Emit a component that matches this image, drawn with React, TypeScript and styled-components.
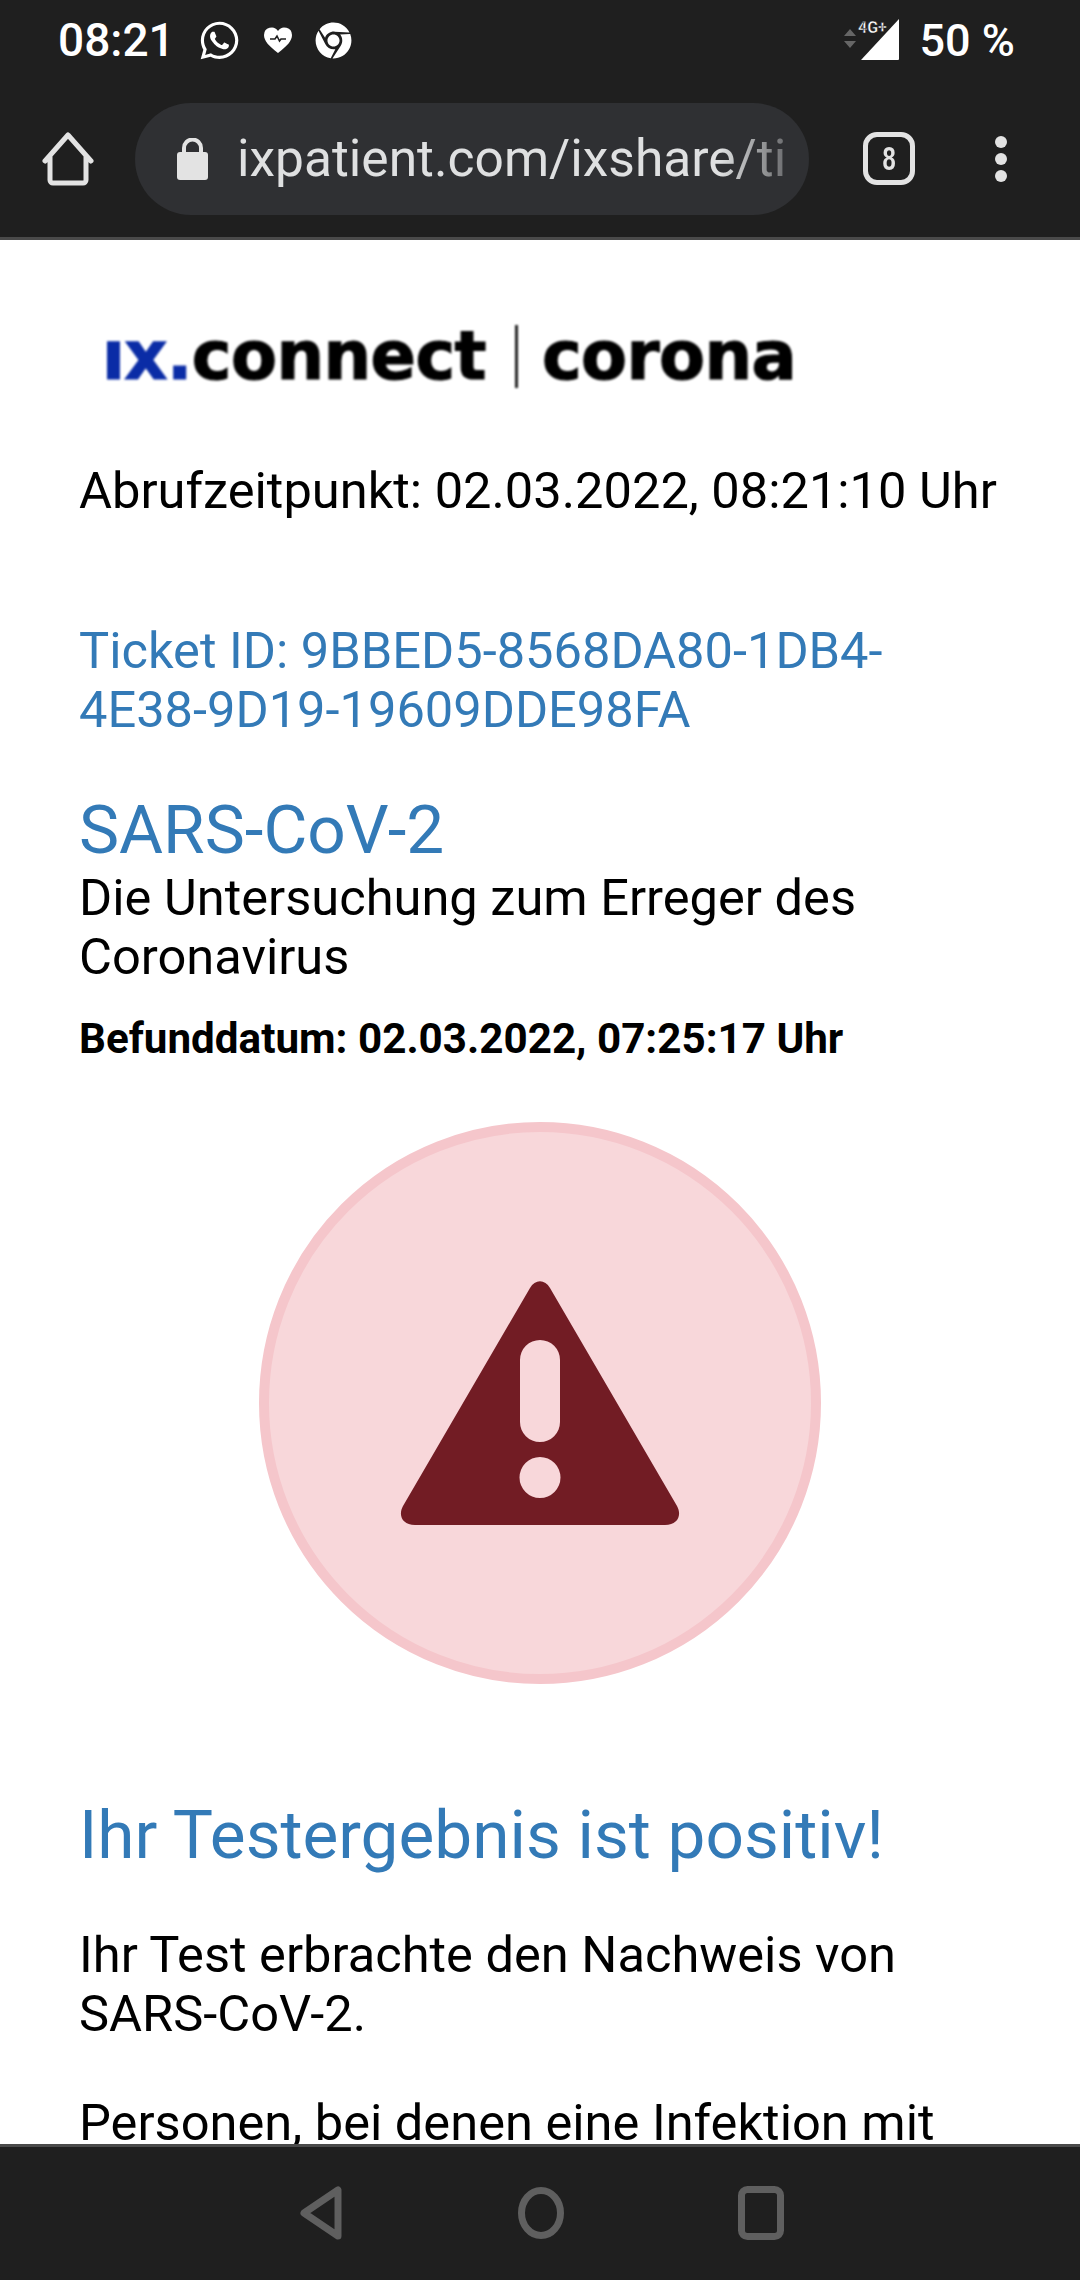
import { FaChrome, FaWhatsapp } from "react-icons/fa";
import styled, { createGlobalStyle } from "styled-components";

const GlobalStyle = createGlobalStyle`
  html, body {
    margin: 0;
    padding: 0;
    background: #1f1f1f;
  }
  * {
    box-sizing: border-box;
  }
`;

const Screen = styled.div`
  width: 1080px;
  height: 2280px;
  display: flex;
  flex-direction: column;
  overflow: hidden;
  font-family: Roboto, "Liberation Sans", sans-serif;
  background: #fff;
`;

const TopChrome = styled.header`
  height: 240px;
  flex: none;
  background: #1f1f1f;
  border-bottom: 3px solid #4a4a4a;
`;

const StatusBar = styled.div`
  height: 80px;
  padding: 0 65px 0 58px;
  display: flex;
  align-items: center;
  color: #fff;
`;

const StatusText = styled.span<{ $large?: boolean }>`
  font-size: ${(p) => (p.$large ? 46 : 45)}px;
  font-weight: 500;
  line-height: 1;
`;

const NotificationIcons = styled.div`
  display: flex;
  align-items: center;
  margin-left: 23px;
  gap: 22px;
  flex: 1;
`;

const SignalWrap = styled.div`
  margin-right: 19px;
`;

const Toolbar = styled.div`
  height: 157px;
  padding-left: 42px;
  display: flex;
  align-items: center;
`;

const AddressBar = styled.div`
  width: 674px;
  height: 112px;
  margin-left: 41px;
  padding: 0 23px 0 42px;
  border-radius: 56px;
  background: #2f3033;
  display: flex;
  align-items: center;
`;

const UrlText = styled.div`
  margin-left: 29px;
  flex: 1;
  overflow: hidden;
  white-space: nowrap;
  font-size: 51.500px;
  line-height: 60px;
  color: #dfe0e1;
  mask-image: linear-gradient(to right, #000 88%, rgba(0, 0, 0, 0.35) 100%);
`;

const TabCount = styled.div`
  width: 52px;
  height: 53px;
  margin-left: 54px;
  border: 5px solid #e3e3e3;
  border-radius: 14px;
  display: flex;
  align-items: center;
  justify-content: center;
  color: #e3e3e3;
`;

const TabDigit = styled.span`
  font-family: "Liberation Sans", sans-serif;
  font-size: 33px;
  font-weight: 700;
  line-height: 1;
  transform: scaleX(0.72);
`;

const MenuDots = styled.div`
  margin-left: 80px;
  display: flex;
  flex-direction: column;
  gap: 5px;
`;

const MenuDot = styled.span`
  width: 12px;
  height: 12px;
  border-radius: 50%;
  background: #e3e3e3;
`;

const Page = styled.main`
  flex: 1;
  min-height: 0;
  overflow: hidden;
  padding: 76px 30px 0 79px;
  color: #000;
`;

const Logo = styled.div`
  height: 80px;
  margin-left: 23px;
  display: flex;
  align-items: center;
  font-family: "DejaVu Sans", sans-serif;
  font-size: 67px;
  font-weight: 700;
  letter-spacing: -0.6px;
  line-height: 80px;
  color: #000;
  -webkit-text-stroke: 1.2px currentColor;
  filter: blur(0.8px);
`;

const LogoBlue = styled.span`
  color: #0a2ca6;
`;

const LogoRule = styled.span`
  width: 3px;
  height: 63px;
  margin: 0 24px 0 29px;
  background: #222;
`;

const BodyText = styled.p<{ $top?: number }>`
  margin: ${(p) => p.$top ?? 0}px 0 0;
  font-size: 50.600px;
  line-height: 59px;
`;

const TicketText = styled(BodyText)`
  color: #337ab7;
`;

const Title = styled.h2<{ $top: number }>`
  margin: ${(p) => p.$top}px 0 0;
  font-size: 67.500px;
  font-weight: 400;
  line-height: 76px;
  color: #337ab7;
`;

const ResultDate = styled.p`
  margin: 28px 0 0;
  font-size: 42.200px;
  font-weight: 700;
  line-height: 50px;
`;

const AlertCircle = styled.div`
  width: 562px;
  height: 562px;
  margin: 58px 0 0 180px;
  border: 10px solid #f5c6cb;
  border-radius: 50%;
  background: #f8d7da;
  display: flex;
  align-items: center;
  justify-content: center;
`;

const NavBar = styled.footer`
  height: 136px;
  flex: none;
  background: #1f1f1f;
  border-top: 3px solid #4a4a4a;
  display: flex;
  align-items: center;
  padding: 0 0 2px 300px;
  gap: 174px;
`;

const HeartPulse = () => (
  <svg width="30" height="28" viewBox="0 0 30 28">
    <path
      fill="#fff"
      d="M15 27C6 20 1 15 1 9a7.6 7.6 0 0 1 14-4 7.6 7.6 0 0 1 14 4c0 6-5 11-14 18z"
    />
    <path
      fill="none"
      stroke="#1f1f1f"
      strokeWidth="1.6"
      d="M7 13h5l2-3 2.500 5 1.500-2h5"
    />
  </svg>
);

const Signal = () => (
  <svg width="58" height="42" viewBox="0 0 58 42" style={{ display: "block" }}>
    <path fill="#666" d="M7 10l6 7H1zM7 29l6-7H1z" />
    <path fill="#fff" d="M56 0v40a1 1 0 0 1-1 1H18z" />
    <text
      x="15"
      y="14"
      fill="#fff"
      stroke="#1f1f1f"
      strokeWidth="0.5"
      fontFamily="Roboto, sans-serif"
      fontSize="16"
      fontWeight="700"
    >
      4G+
    </text>
  </svg>
);

const HomeIcon = () => (
  <svg width="52" height="54" viewBox="0 0 52 54" style={{ flex: "none" }}>
    <path
      fill="none"
      stroke="#e3e3e3"
      strokeWidth="5"
      strokeLinejoin="round"
      strokeLinecap="round"
      d="M3 29 26 3l23 26M8 24v24a3 3 0 0 0 3 3h30a3 3 0 0 0 3-3V24"
    />
  </svg>
);

const LockIcon = () => (
  <svg width="31" height="42" viewBox="0 0 31 42" style={{ flex: "none" }}>
    <path
      fill="#e3e3e3"
      d="M3 14h25a3 3 0 0 1 3 3v22a3 3 0 0 1-3 3H3a3 3 0 0 1-3-3V17a3 3 0 0 1 3-3z"
    />
    <path
      fill="none"
      stroke="#e3e3e3"
      strokeWidth="4"
      d="M7 15V10a8.500 8.500 0 0 1 17 0v5"
    />
  </svg>
);

const WarningIcon = () => (
  <svg width="280" height="244" viewBox="0 0 280 244">
    <path
      fill="#721c24"
      fillRule="evenodd"
      d="M130 7c5-9 15-9 20 0l127 218c5 9 1 19-12 19H15C2 244-2 234 3 225zM120 79v62a20 20 0 0 0 40 0V79a20 20 0 0 0-40 0zM140 176a20.500 20.500 0 1 0 0 41 20.500 20.500 0 0 0 0-41z"
    />
  </svg>
);

const BackIcon = () => (
  <svg width="44" height="54" viewBox="0 0 44 54">
    <path
      fill="none"
      stroke="#5f5f5f"
      strokeWidth="7"
      strokeLinejoin="round"
      d="M38 4v46L4 27z"
    />
  </svg>
);

const HomeCircle = () => (
  <svg width="46" height="54" viewBox="0 0 46 54">
    <ellipse
      cx="23"
      cy="27"
      rx="19.500"
      ry="22.500"
      fill="none"
      stroke="#5f5f5f"
      strokeWidth="7"
    />
  </svg>
);

const RecentsIcon = () => (
  <svg width="46" height="54" viewBox="0 0 46 54">
    <rect
      x="3.500"
      y="3.500"
      width="39"
      height="47"
      rx="6"
      fill="none"
      stroke="#5f5f5f"
      strokeWidth="7"
    />
  </svg>
);

const App = () => {
  return (
    <Screen>
      <GlobalStyle />
      <TopChrome>
        <StatusBar>
          <StatusText $large>08:21</StatusText>
          <NotificationIcons>
            <FaWhatsapp size={43} />
            <HeartPulse />
            <FaChrome size={37} />
          </NotificationIcons>
          <SignalWrap>
            <Signal />
          </SignalWrap>
          <StatusText>50 %</StatusText>
        </StatusBar>
        <Toolbar>
          <HomeIcon />
          <AddressBar>
            <LockIcon />
            <UrlText>ixpatient.com/ixshare/ti</UrlText>
          </AddressBar>
          <TabCount>
            <TabDigit>8</TabDigit>
          </TabCount>
          <MenuDots>
            <MenuDot />
            <MenuDot />
            <MenuDot />
          </MenuDots>
        </Toolbar>
      </TopChrome>

      <Page>
        <Logo>
          <LogoBlue>ıx.</LogoBlue>connect
          <LogoRule />
          corona
        </Logo>
        <BodyText $top={65}>Abrufzeitpunkt: 02.03.2022, 08:21:10 Uhr</BodyText>
        <TicketText $top={101}>
          Ticket ID: 9BBED5-8568DA80-1DB4-
          <br />
          4E38-9D19-19609DDE98FA
        </TicketText>
        <Title $top={53}>SARS-CoV-2</Title>
        <BodyText>
          Die Untersuchung zum Erreger des
          <br />
          Coronavirus
        </BodyText>
        <ResultDate>Befunddatum: 02.03.2022, 07:25:17 Uhr</ResultDate>
        <AlertCircle>
          <WarningIcon />
        </AlertCircle>
        <Title $top={113}>Ihr Testergebnis ist positiv!</Title>
        <BodyText $top={52}>
          Ihr Test erbrachte den Nachweis von
          <br />
          SARS-CoV-2.
        </BodyText>
        <BodyText $top={50}>Personen, bei denen eine Infektion mit</BodyText>
      </Page>

      <NavBar>
        <BackIcon />
        <HomeCircle />
        <RecentsIcon />
      </NavBar>
    </Screen>
  );
};

export default App;
